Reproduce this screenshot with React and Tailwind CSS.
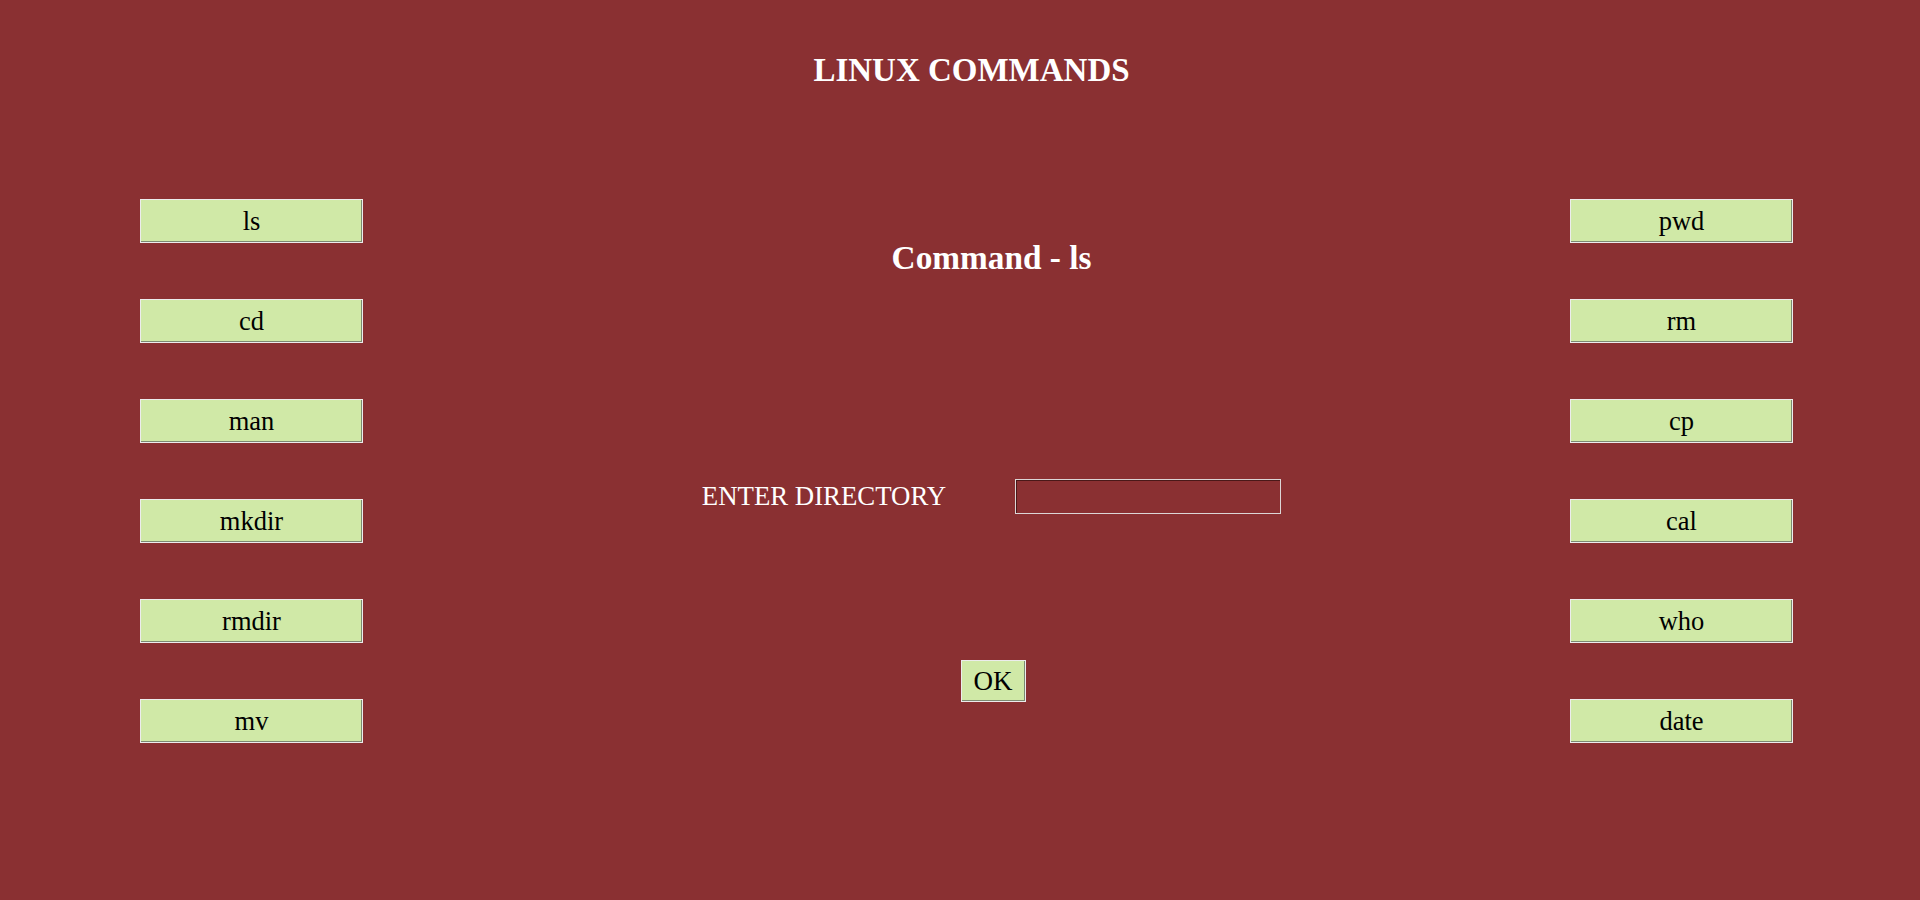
import React from "react";

const left = ["ls", "cd", "man", "mkdir", "rmdir", "mv"];
const right = ["pwd", "rm", "cp", "cal", "who", "date"];

function CmdButton({ label }) {
  return (
    <button className="w-[223px] h-[44px] bg-[#d0e9a7] border border-[#ececec] shadow-[inset_-1px_-1px_0_#7c8a72] text-black text-[26.5px] leading-none flex items-center justify-center">
      {label}
    </button>
  );
}

export default function App() {
  return (
    <div
      className="min-h-[900px] w-full bg-[#8a3032] text-white"
      style={{ fontFamily: '"Liberation Serif", "Times New Roman", serif' }}
    >
      <div className="flex justify-center pl-[23px] pt-[54px]">
        <h1 className="text-[33px] leading-none font-bold">LINUX COMMANDS</h1>
      </div>
      <div className="flex mt-[112px] pl-[140px] pr-[127px]">
        <div className="flex flex-col gap-[56px] w-[223px]">
          {left.map((c) => (
            <CmdButton key={c} label={c} />
          ))}
        </div>
        <div className="flex-1 flex flex-col items-center pl-[50px]">
          <h2 className="mt-[42px] text-[33.3px] leading-none font-bold">Command - ls</h2>
          <div className="mt-[205px] flex items-center gap-[69px]">
            <span className="text-[26.8px] leading-none">ENTER DIRECTORY</span>
            <input
              type="text"
              className="w-[266px] h-[35px] bg-transparent border border-[#dcd6d6] shadow-[inset_1px_1px_0_#4a1818] outline-none text-white px-1"
            />
          </div>
          <button className="mt-[146px] ml-[3px] w-[65px] h-[42px] bg-[#d0e9a7] border border-[#ececec] shadow-[inset_-1px_-1px_0_#7c8a72] text-black text-[27px] leading-none flex items-center justify-center">
            OK
          </button>
        </div>
        <div className="flex flex-col gap-[56px] w-[223px]">
          {right.map((c) => (
            <CmdButton key={c} label={c} />
          ))}
        </div>
      </div>
    </div>
  );
}
